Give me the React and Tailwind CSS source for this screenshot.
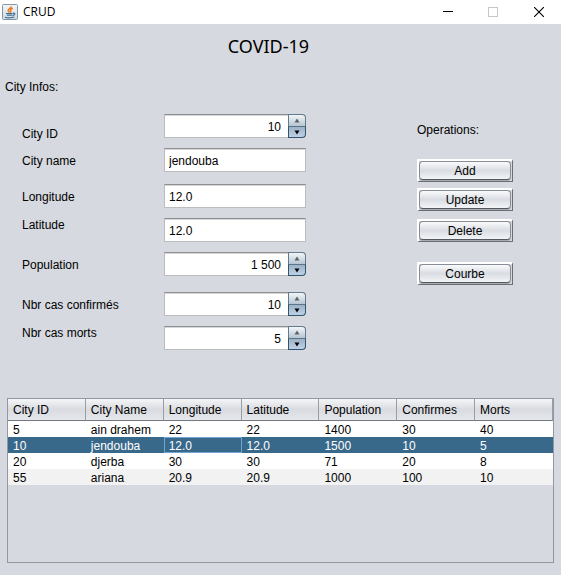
import React, { useState } from "react";

const labels = [
  { id: "city-id", text: "City ID", space: "" },
  { id: "city-name", text: "City name", space: "mt-[11px]" },
  { id: "longitude", text: "Longitude", space: "mt-5" },
  { id: "latitude", text: "Latitude", space: "mt-3" },
  { id: "population", text: "Population", space: "mt-6" },
  { id: "confirmed", text: "Nbr cas confirmés", space: "mt-6" },
  { id: "deaths", text: "Nbr cas morts", space: "mt-3" },
];

const fields = [
  { id: "city-id", value: "10", spinner: true, space: "" },
  { id: "city-name", value: "jendouba", spinner: false, space: "mt-2.5" },
  { id: "longitude", value: "12.0", spinner: false, space: "mt-3" },
  { id: "latitude", value: "12.0", spinner: false, space: "mt-2.5" },
  { id: "population", value: "1 500", spinner: true, space: "mt-2.5" },
  { id: "confirmed", value: "10", spinner: true, space: "mt-4" },
  { id: "deaths", value: "5", spinner: true, space: "mt-2.5" },
];

const operations = [
  { text: "Add", space: "mt-[21px]" },
  { text: "Update", space: "mt-1.5" },
  { text: "Delete", space: "mt-2" },
  { text: "Courbe", space: "mt-5" },
];

const columns = ["City ID", "City Name", "Longitude", "Latitude", "Population", "Confirmes", "Morts"];

const rows = [
  ["5", "ain drahem", "22", "22", "1400", "30", "40"],
  ["10", "jendouba", "12.0", "12.0", "1500", "10", "5"],
  ["20", "djerba", "30", "30", "71", "20", "8"],
  ["55", "ariana", "20.9", "20.9", "1000", "100", "10"],
];

function JavaIcon() {
  return (
    <svg width="16" height="16" viewBox="0 0 16 16" aria-hidden="true">
      <defs>
        <linearGradient id="tile" x1="0" y1="0" x2="0" y2="1">
          <stop offset="0" stopColor="#f4f6f8" />
          <stop offset="1" stopColor="#cfd8df" />
        </linearGradient>
      </defs>
      <rect x="0.5" y="0.5" width="15" height="15" rx="1" fill="url(#tile)" stroke="#7f97a8" />
      <path d="M9.2 2.4C9.6 4 6 4.800 6.200 6.600c.1.800 1 1.200 1.200 1.900M10.900 4.200C8.800 4.900 8 5.700 8.700 6.700c.4.600.3 1.300-.4 1.900" fill="none" stroke="#ee7a1c" strokeWidth="1.500" />
      <path d="M4 9.500h6.700M4.800 11.200h5.400M11 9.300c2.400-.6 2.400 1.700-.3 2.300M3 13.200c2 .8 7 .8 9.300-.2" fill="none" stroke="#3f6d91" strokeWidth="1.200" />
    </svg>
  );
}

function TitleBar() {
  return (
    <header className="flex h-6 items-center bg-white pl-0.5 text-black">
      <JavaIcon />
      <span className="ml-[5px] font-['Open_Sans','Noto_Sans',sans-serif] text-[12px] leading-4">CRUD</span>
      <div className="ml-auto flex">
        <button type="button" aria-label="Minimize" className="flex h-6 w-[45px] items-center justify-center">
          <svg width="10" height="10" viewBox="0 0 10 10" shapeRendering="crispEdges"><path d="M0 4.500h10" stroke="#000" /></svg>
        </button>
        <button type="button" aria-label="Maximize" disabled className="flex h-6 w-[46px] items-center justify-center">
          <svg width="10" height="10" viewBox="0 0 10 10"><rect x="0.500" y="0.500" width="9" height="9" fill="none" stroke="#c6c6c6" /></svg>
        </button>
        <button type="button" aria-label="Close" className="flex h-6 w-[45px] items-center justify-center">
          <svg width="10" height="10" viewBox="0 0 10 10"><path d="M0 0l10 10M10 0L0 10" stroke="#000" strokeWidth="1.100" /></svg>
        </button>
      </div>
    </header>
  );
}

function Arrow({ up }) {
  return (
    <svg width="6" height="5" viewBox="0 0 6 5" aria-hidden="true">
      <path d={up ? "M3 0.500L5.500 4.500H0.500z" : "M3 4.500L0.500 0.500H5.500z"} fill={up ? "#5c6166" : "#000"} />
    </svg>
  );
}

function Field({ field }) {
  const [value, setValue] = useState(field.value);
  const step = (amount) => setValue((v) => String(Number(v.replace(/\s/g, "")) + amount));
  return (
    <div className={`flex h-6 ${field.space}`}>
      <input
        id={field.id}
        type="text"
        value={value}
        onChange={(e) => setValue(e.target.value)}
        className={`h-6 min-w-0 flex-1 rounded-none border border-[#bbbcc0] border-t-[#8d8e91] bg-white pt-0.5 text-[12px] leading-4 text-black shadow-[inset_0_1px_0_#d6d7d9] outline-none ${
          field.spinner ? "border-r-0 pr-[7px] text-right" : "px-1"
        }`}
      />
      {field.spinner && (
        <div className="flex w-[18px] flex-col">
          <button type="button" aria-label="Increase" onClick={() => step(1)} className="flex h-3 items-center justify-center rounded-tr-[4px] border border-b-0 border-[#62798d] bg-linear-to-b from-[#f3f6f9] to-[#b5c5d2]">
            <Arrow up />
          </button>
          <button type="button" aria-label="Decrease" onClick={() => step(-1)} className="flex h-3 items-center justify-center rounded-br-[4px] border border-[#35526b] border-t-[#5b7489] bg-linear-to-b from-[#9db2c6] to-[#bdd2e6]">
            <Arrow />
          </button>
        </div>
      )}
    </div>
  );
}

function Operation({ text, space }) {
  return (
    <button type="button" className={`h-[23px] border border-t-2 border-l-2 border-white border-r-[#6c6e73] border-b-[#6c6e73] bg-[#d6d9df] pr-px pb-px ${space}`}>
      <span className="flex h-full items-center justify-center rounded-[4px] border border-[#888c94] border-b-[#55585e] bg-linear-to-b from-[#fafbfc] via-[#d9dce2] to-[#f2f4f7] leading-4 shadow-[0_1px_0_#a8abb1]">
        {text}
      </span>
    </button>
  );
}

function CityTable() {
  return (
    <div className="mx-[7px] mt-12 h-[165px] border border-[#9297a1]">
      <table className="w-full table-fixed border-separate border-spacing-0 text-left">
        <thead>
          <tr className="h-[22px]">
            {columns.map((c) => (
              <th key={c} className="border-r border-b border-r-[#9a9da4] border-b-[#75787e] bg-linear-to-b from-[#f5f6f8] via-[#d9dbe0] to-[#e4e7ec] p-0 pl-[5px] font-normal leading-4">
                {c}
              </th>
            ))}
          </tr>
        </thead>
        <tbody>
          {rows.map((row, r) => (
            <tr key={row[0]} aria-selected={r === 1} className={r === 1 ? "bg-[#39698a] text-white" : r === 3 ? "bg-[#f2f2f2]" : "bg-white"}>
              {row.map((cell, c) => (
                <td key={c} className={`h-4 p-0 pt-0.5 pl-[5px] leading-[14px] ${r === 1 && c === 2 ? "shadow-[inset_0_0_0_1px_#73a4d1]" : ""}`}>
                  {cell}
                </td>
              ))}
            </tr>
          ))}
        </tbody>
      </table>
    </div>
  );
}

export default function App() {
  return (
    <div className="min-h-screen bg-[#d6d9df] pb-3 font-['Liberation_Sans',Arial,sans-serif] text-[12px] text-black">
      <TitleBar />
      <main>
        <h1 className="mt-2.5 pr-6 text-center font-['Noto_Sans','Open_Sans',sans-serif] text-[18px] leading-6">COVID-19</h1>
        <h2 className="mt-[21px] ml-[5px] leading-4">City Infos:</h2>
        <form className="mt-[19px] flex items-start pr-12 pl-[22px]" onSubmit={(e) => e.preventDefault()}>
          <div className="flex w-[142px] shrink-0 flex-col pt-3">
            {labels.map((l) => (
              <label key={l.id} htmlFor={l.id} className={`leading-4 ${l.space}`}>{l.text}</label>
            ))}
          </div>
          <div className="flex min-w-[142px] flex-1 flex-col">
            {fields.map((f) => <Field key={f.id} field={f} />)}
          </div>
          <div className="ml-[111px] flex w-24 shrink-0 flex-col pt-2">
            <h2 className="leading-4">Operations:</h2>
            {operations.map((o) => <Operation key={o.text} {...o} />)}
          </div>
        </form>
        <CityTable />
      </main>
    </div>
  );
}
